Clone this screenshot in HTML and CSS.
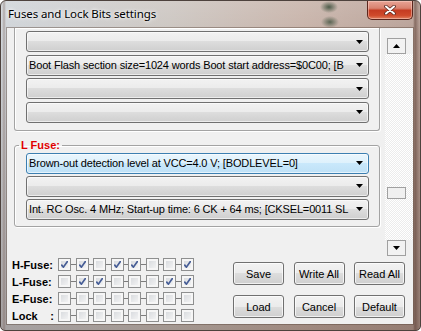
FILE: index.html
```html
<!DOCTYPE html>
<html>
<head>
<meta charset="utf-8">
<link rel="stylesheet" href="styles.css">
</head>
<body>
<div class="window">
  <div class="titlebar">
    <span class="title">Fuses and Lock Bits settings</span>
    <div class="close">
      <svg width="12" height="10" viewBox="0 0 12 10"><path d="M2 1.5 L10 8.5 M10 1.5 L2 8.5" stroke="#5a2a22" stroke-width="3.6" stroke-linecap="round"/><path d="M2 1.5 L10 8.5 M10 1.5 L2 8.5" stroke="#fff" stroke-width="2" stroke-linecap="round"/></svg>
    </div>
  </div>
  <div class="client">
    <div class="scroller">
      <div class="content">
        <div class="group group-cut">
          <div class="combos">
            <div class="combo"><span class="ctext"></span><svg class="arrow" width="7" height="4" viewBox="0 0 7 4"><polygon points="0,0 7,0 3.5,4" fill="#000"/></svg></div>
            <div class="combo"><span class="ctext">Boot Flash section size=1024 words Boot start address=$0C00; [B</span><svg class="arrow" width="7" height="4" viewBox="0 0 7 4"><polygon points="0,0 7,0 3.5,4" fill="#000"/></svg></div>
            <div class="combo"><span class="ctext"></span><svg class="arrow" width="7" height="4" viewBox="0 0 7 4"><polygon points="0,0 7,0 3.5,4" fill="#000"/></svg></div>
            <div class="combo"><span class="ctext"></span><svg class="arrow" width="7" height="4" viewBox="0 0 7 4"><polygon points="0,0 7,0 3.5,4" fill="#000"/></svg></div>
          </div>
        </div>
        <fieldset class="group group-l">
          <legend>L Fuse:</legend>
          <div class="combos tight">
            <div class="combo active"><span class="ctext">Brown-out detection level at VCC=4.0 V; [BODLEVEL=0]</span><svg class="arrow" width="7" height="4" viewBox="0 0 7 4"><polygon points="0,0 7,0 3.5,4" fill="#000"/></svg></div>
            <div class="combo"><span class="ctext"></span><svg class="arrow" width="7" height="4" viewBox="0 0 7 4"><polygon points="0,0 7,0 3.5,4" fill="#000"/></svg></div>
            <div class="combo"><span class="ctext">Int. RC Osc. 4 MHz; Start-up time: 6 CK + 64 ms; [CKSEL=0011 SL</span><svg class="arrow" width="7" height="4" viewBox="0 0 7 4"><polygon points="0,0 7,0 3.5,4" fill="#000"/></svg></div>
          </div>
        </fieldset>
      </div>
      <div class="vscroll">
        <div class="sbtn up"><svg width="7" height="4" viewBox="0 0 7 4"><polygon points="0,4 7,4 3.5,0" fill="#000"/></svg></div>
        <div class="track"><div class="thumb"></div></div>
        <div class="sbtn down"><svg width="7" height="4" viewBox="0 0 7 4"><polygon points="0,0 7,0 3.5,4" fill="#000"/></svg></div>
      </div>
    </div>
    <div class="bottom">
      <div class="fuse-rows">
        <div class="fuse-row"><span class="flabel">H-Fuse:</span>
          <div class="bits">
            <span class="cb on"></span><span class="cb on"></span><span class="cb"></span><span class="cb on"></span><span class="cb on"></span><span class="cb"></span><span class="cb"></span><span class="cb on"></span>
          </div>
        </div>
        <div class="fuse-row"><span class="flabel">L-Fuse:</span>
          <div class="bits">
            <span class="cb"></span><span class="cb on"></span><span class="cb on"></span><span class="cb"></span><span class="cb"></span><span class="cb"></span><span class="cb on"></span><span class="cb on"></span>
          </div>
        </div>
        <div class="fuse-row"><span class="flabel">E-Fuse:</span>
          <div class="bits">
            <span class="cb"></span><span class="cb"></span><span class="cb"></span><span class="cb"></span><span class="cb"></span><span class="cb"></span><span class="cb"></span><span class="cb"></span>
          </div>
        </div>
        <div class="fuse-row"><span class="flabel lock"><span>Lock</span><span>:</span></span>
          <div class="bits">
            <span class="cb"></span><span class="cb"></span><span class="cb"></span><span class="cb"></span><span class="cb"></span><span class="cb"></span><span class="cb"></span><span class="cb"></span>
          </div>
        </div>
      </div>
      <div class="buttons">
        <div class="btn">Save</div>
        <div class="btn">Write All</div>
        <div class="btn">Read All</div>
        <div class="btn">Load</div>
        <div class="btn">Cancel</div>
        <div class="btn">Default</div>
      </div>
    </div>
  </div>
</div>
</body>
</html>
```
FILE: styles.css
```css
* { box-sizing: border-box; }
html, body { margin: 0; padding: 0; background: #ffffff; }
body {
  width: 421px; height: 331px; overflow: hidden;
  font-family: "Liberation Sans", Arial, sans-serif;
  font-size: 11px; color: #000;
}

.window {
  width: 421px; height: 331px;
  border: 1px solid #4d423d;
  border-radius: 6px 6px 5px 5px;
  padding: 0 7px 6px 6px;
  display: flex; flex-direction: column;
  background:
    radial-gradient(ellipse 9px 6px at 328px 6px, rgba(55,75,55,.85), rgba(55,75,55,0)),
    radial-gradient(ellipse 9px 6px at 329px 21px, rgba(55,75,55,.75), rgba(55,75,55,0)),
    linear-gradient(to right, rgba(0,0,0,0) 412px, rgba(90,60,50,.55) 414px, rgba(90,60,50,.2) 417px, rgba(0,0,0,0) 419px),
    linear-gradient(to right, rgba(0,0,0,0) 1px, rgba(110,80,70,.35) 3px, rgba(0,0,0,0) 5px),
    linear-gradient(to bottom, rgba(255,255,255,.15), rgba(255,255,255,0) 40px, rgba(70,45,35,.3)),
    linear-gradient(to right, #cfd4d9 0%, #cbc5c0 40%, #c6b1a7 72%, #b69e94 100%);
}

.titlebar {
  height: 27px; flex: none;
  display: flex; justify-content: space-between; align-items: flex-start;
}
.title {
  margin: 6px 0 0 1px;
  font-family: "Noto Sans", "Open Sans", sans-serif;
  font-size: 11.5px; line-height: 14px; letter-spacing: -0.1px;
  color: #000;
  text-shadow: 0 0 5px #fff, 0 0 3px rgba(255,255,255,.9);
}
.close {
  width: 46px; height: 19px;
  border: 1px solid #5b261d; border-top: none;
  border-radius: 0 0 5px 5px;
  background: linear-gradient(#e8a496 0%, #d9826f 40%, #c53c22 52%, #cf4a2b 80%, #e1805f 100%);
  box-shadow: inset 0 0 0 1px rgba(255,220,210,.45);
  display: flex; align-items: center; justify-content: center;
}

.client {
  flex: 1; display: flex; flex-direction: column;
  background: #f0f0f0;
  box-shadow: 0 0 0 1px rgba(90,70,60,.45);
}

.scroller { height: 228px; flex: none; display: flex; }
.content { width: 378px; overflow: hidden; padding-left: 7px; }

.group {
  width: 366px;
  border: 1px solid #a3a3a3;
  border-radius: 3px;
  box-shadow: inset 1px 1px 0 #fff, 1px 1px 0 #fff;
  margin: 0;
}
.group-cut {
  border-top: none;
  border-radius: 0 0 3px 3px;
  padding: 3px 10px 7px 11px;
}
.group-l {
  margin-top: 8px;
  padding: 1px 10px 6px 4px;
  min-width: 0;
}
.group-l legend {
  padding: 0 2px;
  font-weight: bold; color: #e00000;
  font-size: 11px; line-height: 13px;
}
.group-l .combos { padding-left: 7px; }

.combos { display: flex; flex-direction: column; gap: 2.5px; }
.combos.tight { gap: 2px; }

.combo {
  height: 21px;
  display: flex; align-items: center;
  border: 1px solid #707070; border-radius: 3px;
  background: linear-gradient(#f2f2f2 0%, #ebebeb 50%, #dddddd 50%, #cfcfcf 100%);
  box-shadow: inset 0 0 0 1px rgba(255,255,255,.6);
  padding-left: 2px;
}
.combo.active {
  border-color: #3c7fb1;
  background: linear-gradient(#eaf6fd 0%, #ddf1fc 50%, #c9e8fb 50%, #bfe1f6 100%);
}
.ctext {
  flex: 1; white-space: nowrap;
  line-height: 13px; letter-spacing: -0.15px;
}
.arrow { flex: none; margin: 0 5px 0 4px; }

.vscroll { width: 28px; display: flex; flex-direction: column; }
.sbtn {
  flex: none;
  width: 19px; height: 16px; margin-left: 2px;
  border: 1px solid #a0a0a0;
  background: #f2f2f2;
  display: flex; align-items: center; justify-content: center;
}
.sbtn.up { margin-top: 10px; }
.track {
  flex: 1;
  background: repeating-conic-gradient(#ffffff 0 25%, #ececec 0 50%) 0 0 / 2px 2px;
}
.thumb {
  width: 19px; height: 12px; margin: 133px 0 0 2px;
  border: 1px solid #a0a0a0; background: #f0f0f0;
}

.bottom { flex: 1; display: flex; }
.fuse-rows { padding-left: 5px; display: flex; flex-direction: column; }
.fuse-row { height: 17px; display: flex; align-items: center; }
.flabel { width: 46px; font-weight: bold; font-size: 11px; white-space: nowrap; }
.flabel.lock { display: flex; justify-content: space-between; padding-right: 4px; }
.bits {
  display: flex; gap: 4.5px;
  background: linear-gradient(#7c7c7c, #7c7c7c) center / 100% 1px no-repeat;
}
.cb {
  width: 13px; height: 13px;
  border: 1px solid #8e8f8f;
  background: linear-gradient(135deg, #d3d6da, #f8f8f8);
  box-shadow: inset 0 0 0 2px #f6f6f6;
}
.cb.on {
  background:
    url("data:image/svg+xml,%3Csvg xmlns='http://www.w3.org/2000/svg' width='11' height='11'%3E%3Cpath d='M2.3 5.6 L4.4 8.2 L8.9 1.8' fill='none' stroke='%23465d96' stroke-width='1.7'/%3E%3C/svg%3E") center / 11px 11px no-repeat,
    linear-gradient(135deg, #d3d6da, #f8f8f8);
}

.buttons {
  margin-left: auto; margin-top: 6px; padding-right: 8px;
  display: grid;
  grid-template-columns: repeat(3, 51px);
  grid-auto-rows: 23px;
  column-gap: 9.5px; row-gap: 10px;
  align-content: start;
}
.btn {
  border: 1px solid #707070; border-radius: 3px;
  background: linear-gradient(#f2f2f2 0%, #ebebeb 50%, #dddddd 50%, #cfcfcf 100%);
  box-shadow: inset 0 0 0 1px rgba(255,255,255,.7);
  display: flex; align-items: center; justify-content: center;
  font-size: 11px;
}
```
